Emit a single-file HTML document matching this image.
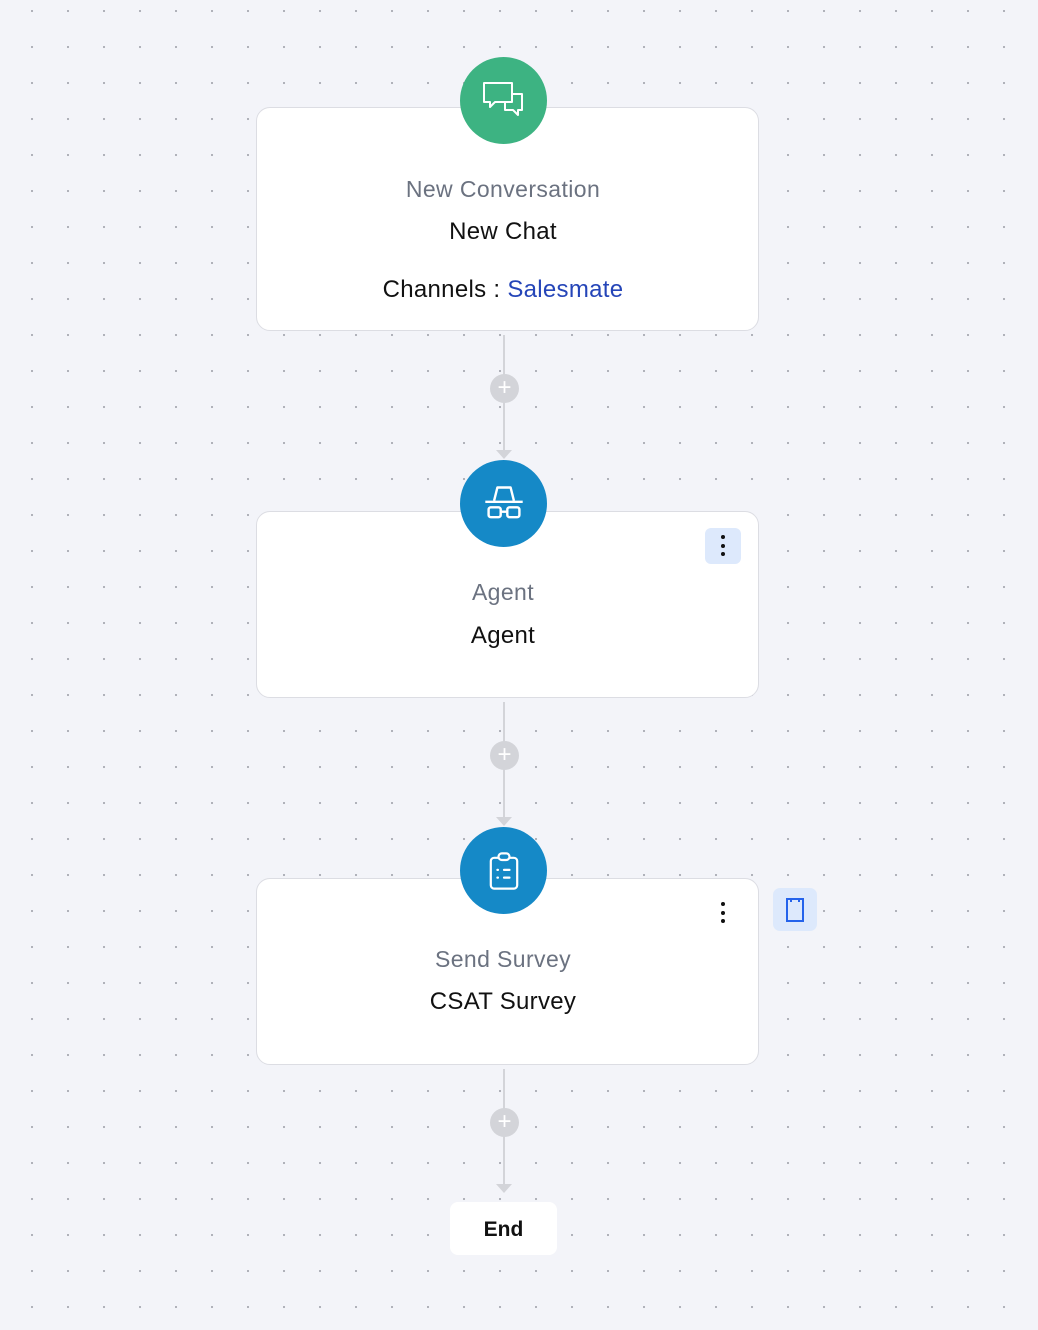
<!DOCTYPE html>
<html><head><meta charset="utf-8"><style>
*{margin:0;padding:0;box-sizing:border-box}
body{width:1038px;height:1330px;position:relative;overflow:hidden;background-color:#f3f4f9;
background-image:radial-gradient(circle at 1px 1px,#a9abb3 0.9px,transparent 1.3px);
background-size:36px 36px;background-position:31px 10px;
font-family:"Liberation Sans",sans-serif}
.card{position:absolute;left:256px;width:503px;background:#fff;border:1px solid #dcdde3;border-radius:14px}
.circ{position:absolute;left:460px;width:87px;height:87px;border-radius:50%;display:flex;align-items:center;justify-content:center}
.t{position:absolute;left:203px;width:600px;text-align:center;font-size:23px;letter-spacing:0.4px}
.sub{color:#6b7280}
.main{color:#111;font-size:24px;letter-spacing:0.3px}
.line{position:absolute;left:503px;width:2px;background:#d3d4d9}
.plus{position:absolute;left:490px;width:29px;height:29px;border-radius:50%;background:#d3d4d9;color:#fff;font-size:24px;line-height:28px;text-align:center}
.arr{position:absolute;left:496px;width:0;height:0;border-left:8px solid transparent;border-right:8px solid transparent;border-top:9px solid #d3d4d9}
.dots{position:absolute;width:4px}
.dots i{display:block;width:4px;height:4px;border-radius:50%;background:#111;margin-bottom:4.5px}
</style></head><body>

<div class="card" style="top:107px;height:224px"></div>
<div class="circ" style="top:57px;background:#3db382">
<svg width="44" height="44" viewBox="0 0 44 44" fill="none" stroke="#fff" stroke-width="2" stroke-linejoin="round"><path d="M2 4h28v19H13l-5 5v-5H2z"/><path d="M30 15h10v16h-4v5l-5-5h-8v-8"/></svg>
</div>
<div class="t sub" style="top:176px">New Conversation</div>
<div class="t main" style="top:218px">New Chat</div>
<div class="t main" style="top:276px">Channels : <span style="color:#2545b8">Salesmate</span></div>

<div class="line" style="top:335px;height:118px"></div>
<div class="plus" style="top:374px">+</div>
<div class="arr" style="top:450px"></div>

<div class="card" style="top:511px;height:187px"></div>
<div class="circ" style="top:460px;background:#1589c7">
<svg width="44" height="44" viewBox="0 0 40 40" fill="none" stroke="#fff" stroke-width="2.2" stroke-linejoin="round"><path d="M11 17l3-12h12l3 12"/><path d="M3 18h34"/><rect x="6" y="23" width="11" height="9" rx="2"/><rect x="23" y="23" width="11" height="9" rx="2"/><path d="M17 27h6"/></svg>
</div>
<div style="position:absolute;left:705px;top:528px;width:36px;height:36px;border-radius:6px;background:#dde9fc"></div>
<div class="dots" style="left:721px;top:535px"><i></i><i></i><i></i></div>
<div class="t sub" style="top:579px">Agent</div>
<div class="t main" style="top:622px">Agent</div>

<div class="line" style="top:702px;height:118px"></div>
<div class="plus" style="top:741px">+</div>
<div class="arr" style="top:817px"></div>

<div class="card" style="top:878px;height:187px"></div>
<div class="circ" style="top:827px;background:#1589c7">
<svg width="44" height="44" viewBox="0 0 40 40" fill="none" stroke="#fff" stroke-width="2" stroke-linejoin="round" stroke-linecap="round"><rect x="8" y="8" width="24" height="28" rx="3"/><rect x="15" y="4" width="10" height="6" rx="3" fill="#1589c7"/><path d="M14 19h0.5M14 26h0.5M20 19h5M20 26h5"/></svg>
</div>
<div class="dots" style="left:721px;top:902px"><i></i><i></i><i></i></div>
<div style="position:absolute;left:773px;top:888px;width:44px;height:43px;border-radius:7px;background:#dde9fc"></div>
<svg style="position:absolute;left:786px;top:898px" width="18" height="24" viewBox="0 0 18 24" fill="none" stroke="#2563eb" stroke-width="2"><rect x="1" y="1" width="16" height="22"/><path d="M5 1v3M13 1v3"/></svg>
<div class="t sub" style="top:946px">Send Survey</div>
<div class="t main" style="top:988px">CSAT Survey</div>

<div class="line" style="top:1069px;height:118px"></div>
<div class="plus" style="top:1108px">+</div>
<div class="arr" style="top:1184px"></div>

<div style="position:absolute;left:450px;top:1202px;width:107px;height:53px;background:#fff;border-radius:8px;text-align:center;line-height:56px;font-size:21px;font-weight:bold;color:#111">End</div>
</body></html>
